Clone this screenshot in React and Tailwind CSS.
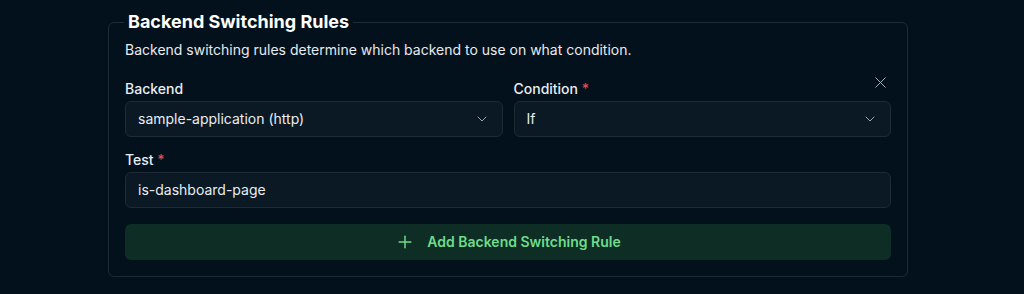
import { ChevronDown, X, Plus } from 'lucide-react';

function SelectBox({ value }) {
  return (
    <div className="h-9 flex items-center justify-between rounded-md border border-[#1e2b37] bg-[#0b1924] pl-3 pr-3 text-sm text-[#e8edf2]">
      <span>{value}</span>
      <ChevronDown className="w-4 h-4 text-[#9aa6b2]" strokeWidth={1.5} />
    </div>
  );
}

export default function App() {
  return (
    <div className="min-h-[294px] bg-[#03111c] pl-[108px] pt-[8px]" style={{ fontFamily: 'Inter, "Noto Sans", sans-serif' }}>
      <fieldset className="w-[800px] rounded-md border border-[#1e2b37] px-4 pb-4 pt-0">
        <legend className="px-1 -ml-[1px] text-lg font-bold text-white leading-7">Backend Switching Rules</legend>
        <p className="text-sm text-[#e6ebef] mt-[4px]">Backend switching rules determine which backend to use on what condition.</p>

        <div className="relative grid grid-cols-2 gap-[11px] mt-[19px]">
          <div className="flex flex-col gap-[2px]">
            <label className="text-sm font-medium text-[#e8edf2]">Backend</label>
            <SelectBox value="sample-application (http)" />
          </div>
          <div className="flex flex-col gap-[2px]">
            <label className="text-sm font-medium text-[#e8edf2]">
              Condition <span className="text-[#e5484d]">*</span>
            </label>
            <SelectBox value="If" />
          </div>
          <button className="absolute right-[1px] -top-[6px] text-[#a7b1bb]">
            <X className="w-[19px] h-[19px]" strokeWidth={1.25} />
          </button>
        </div>

        <div className="flex flex-col gap-[2px] mt-[13px]">
          <label className="text-sm font-medium text-[#e8edf2]">
            Test <span className="text-[#e5484d]">*</span>
          </label>
          <div className="h-9 flex items-center rounded-md border border-[#1e2b37] bg-[#0b1924] px-3 text-sm text-[#e8edf2]">
            is-dashboard-page
          </div>
        </div>

        <button className="mt-4 h-9 w-full flex items-center justify-center gap-3 rounded-md bg-[#0e2e25] text-sm font-semibold text-[#6fdc8c]">
          <Plus className="w-5 h-5" strokeWidth={1.75} />
          Add Backend Switching Rule
        </button>
      </fieldset>
    </div>
  );
}
